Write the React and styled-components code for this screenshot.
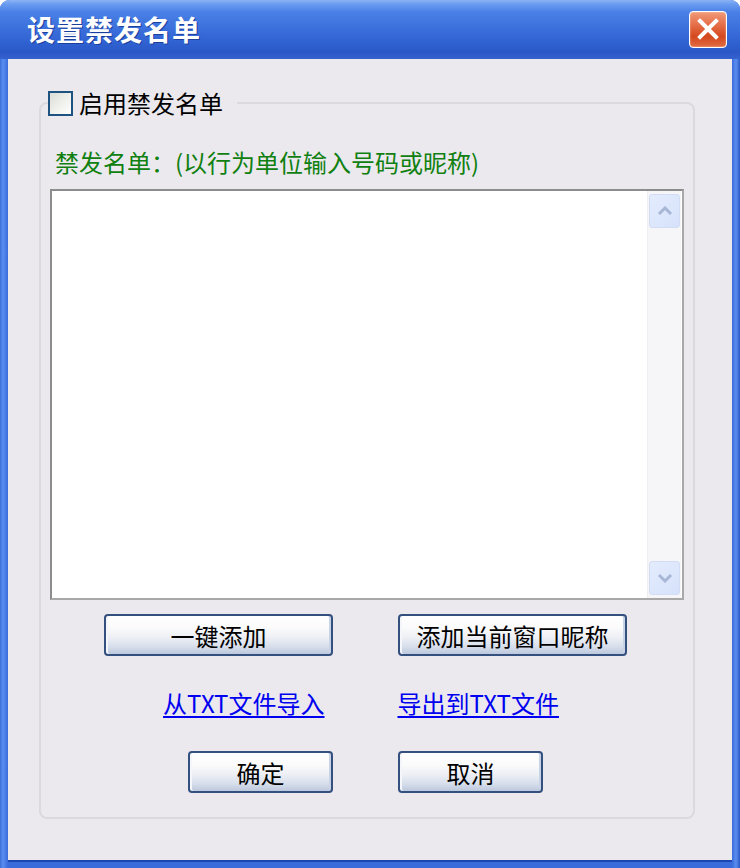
import React from "react"
import styled, { createGlobalStyle } from "styled-components"

const GlobalStyle = createGlobalStyle`
  html, body {
    margin: 0;
    padding: 0;
    background: #ffffff;
  }
  body {
    font-family: "Noto Sans CJK SC", "Liberation Sans", sans-serif;
  }
`

const cjk = `"Noto Sans CJK SC", "Liberation Sans", sans-serif`

export default function App() {
  return (
    <>
      <GlobalStyle />
      <Window>
        <TitleBar>
          <Title>设置禁发名单</Title>
          <CloseButton aria-label="关闭">
            <svg width="24" height="24" viewBox="0 0 24 24">
              <path
                d="M4 4 L20 20 M20 4 L4 20"
                stroke="#ffffff"
                strokeWidth="4"
                strokeLinecap="square"
              />
            </svg>
          </CloseButton>
        </TitleBar>
        <Client>
          <GroupBox>
            <Legend>
              <CheckBox type="checkbox" />
              <LegendText>启用禁发名单</LegendText>
            </Legend>
            <HintLabel>禁发名单：(以行为单位输入号码或昵称)</HintLabel>
            <ListBox>
              <ListInput spellCheck={false} />
              <ScrollBar>
                <ScrollArrow>
                  <svg width="16" height="10" viewBox="0 0 16 10">
                    <path d="M2 8 L8 2 L14 8" fill="none" stroke="#a9b7d6" strokeWidth="3" />
                  </svg>
                </ScrollArrow>
                <ScrollTrack />
                <ScrollArrow>
                  <svg width="16" height="10" viewBox="0 0 16 10">
                    <path d="M2 2 L8 8 L14 2" fill="none" stroke="#a9b7d6" strokeWidth="3" />
                  </svg>
                </ScrollArrow>
              </ScrollBar>
            </ListBox>
            <ButtonRow $top={14}>
              <XPButton $width={229}>一键添加</XPButton>
              <XPButton $width={229}>添加当前窗口昵称</XPButton>
            </ButtonRow>
            <LinkRow>
              <TextLink href="#">从TXT文件导入</TextLink>
              <TextLink href="#">导出到TXT文件</TextLink>
            </LinkRow>
            <ButtonRow $top={33}>
              <XPButton $width={145}>确定</XPButton>
              <XPButton $width={145}>取消</XPButton>
            </ButtonRow>
          </GroupBox>
        </Client>
      </Window>
    </>
  )
}

const Window = styled.div`
  width: 740px;
  height: 868px;
  display: flex;
  flex-direction: column;
  box-sizing: border-box;
  border-radius: 9px 9px 0 0;
  background: linear-gradient(90deg, #3b6fd8 0px, #5b8ef0 3px, #3a6cdc 8px, #3a6cdc 732px, #5b8ef0 736px, #2c58c4 740px);
  overflow: hidden;
`

const TitleBar = styled.div`
  height: 59px;
  flex: none;
  display: flex;
  align-items: center;
  justify-content: space-between;
  padding: 0 13px 0 27px;
  border-radius: 9px 9px 0 0;
  background: linear-gradient(
    180deg,
    #8cb4f4 0px,
    #6a9cf0 4px,
    #4a80e6 12px,
    #3c70dc 28px,
    #2f60d0 44px,
    #2b58c6 52px,
    #3562cf 59px
  );
`

const Title = styled.span`
  font-family: ${cjk};
  font-size: 28px;
  font-weight: 700;
  color: #ffffff;
  letter-spacing: 1px;
  text-shadow: 1px 1px 0 #1c3f9c;
  margin-top: -2px;
`

const CloseButton = styled.button`
  width: 38px;
  height: 37px;
  padding: 0;
  display: flex;
  align-items: center;
  justify-content: center;
  border: 1px solid #ffffff;
  border-radius: 4px;
  background: linear-gradient(180deg, #f09a78 0%, #e6704a 35%, #d4481e 70%, #e06a40 100%);
  box-shadow: inset 0 0 2px rgba(255, 255, 255, 0.6);
  cursor: pointer;
  margin-top: -1px;
`

const Client = styled.div`
  flex: 1;
  margin: 0 8px 8px 8px;
  background: #ebe9ee;
  display: flex;
  padding: 29px 37px 41px 31px;
  box-shadow: 0 2px 0 #1d47b0;
`

const GroupBox = styled.fieldset`
  flex: 1;
  margin: 0;
  padding: 0 9px 0 9px;
  border: 2px solid #dbd9de;
  border-radius: 8px;
  display: flex;
  flex-direction: column;
  min-width: 0;
`

const Legend = styled.legend`
  display: flex;
  align-items: center;
  gap: 6px;
  padding: 0 14px 0 0;
  margin-left: -2px;
`

const CheckBox = styled.input`
  appearance: none;
  width: 25px;
  height: 25px;
  margin: 0;
  box-sizing: border-box;
  border: 2px solid #1d5281;
  background: linear-gradient(135deg, #dcdcd6 0%, #f2f2ef 60%, #ffffff 100%);
`

const LegendText = styled.span`
  font-family: ${cjk};
  font-size: 24px;
  color: #000000;
  line-height: 30px;
`

const HintLabel = styled.div`
  font-family: ${cjk};
  font-size: 24px;
  color: #108010;
  line-height: 30px;
  margin: 29px 0 0 5px;
`

const ListBox = styled.div`
  display: flex;
  height: 411px;
  margin-top: 12px;
  box-sizing: border-box;
  border: 2px solid #8c8c8c;
  border-right-color: #a8a8a8;
  border-bottom-color: #a8a8a8;
  background: #ffffff;
`

const ListInput = styled.textarea`
  flex: 1;
  border: none;
  outline: none;
  resize: none;
  overflow: hidden;
  font-family: ${cjk};
  font-size: 22px;
  padding: 4px 6px;
  background: transparent;
`

const ScrollBar = styled.div`
  width: 33px;
  margin-right: 1px;
  display: flex;
  flex-direction: column;
  padding: 3px 0;
  background: #f6f6f8;
  border-left: 1px solid #eeeef2;
`

const ScrollArrow = styled.div`
  height: 32px;
  margin: 0 1px;
  display: flex;
  align-items: center;
  justify-content: center;
  border: 1px solid #d2dcf4;
  border-radius: 3px;
  background: linear-gradient(135deg, #e4ecfd 0%, #d6e2fb 100%);
`

const ScrollTrack = styled.div`
  flex: 1;
`

const ButtonRow = styled.div`
  display: flex;
  justify-content: center;
  gap: 65px;
  margin-top: ${(p) => p.$top}px;
  padding-right: 3px;
`

const XPButton = styled.button`
  width: ${(p) => p.$width}px;
  height: 42px;
  box-sizing: border-box;
  padding: 0;
  font-family: ${cjk};
  font-size: 24px;
  color: #000000;
  border: 2px solid #34507e;
  border-radius: 4px;
  background: linear-gradient(
    180deg,
    #ffffff 0%,
    #fbfbfb 30%,
    #eef0f5 55%,
    #d8dfec 80%,
    #bcc8dd 100%
  );
  box-shadow: inset 2px 0 0 #f4f6fb, inset -2px 0 0 #c9d3e6;
  cursor: pointer;
`

const LinkRow = styled.div`
  display: flex;
  justify-content: center;
  gap: 73px;
  margin-top: 32px;
  padding-right: 12px;
`

const TextLink = styled.a`
  font-family: ${cjk};
  font-size: 24px;
  line-height: 30px;
  color: #0000f0;
  text-decoration: underline;
  text-underline-offset: 3px;
`
